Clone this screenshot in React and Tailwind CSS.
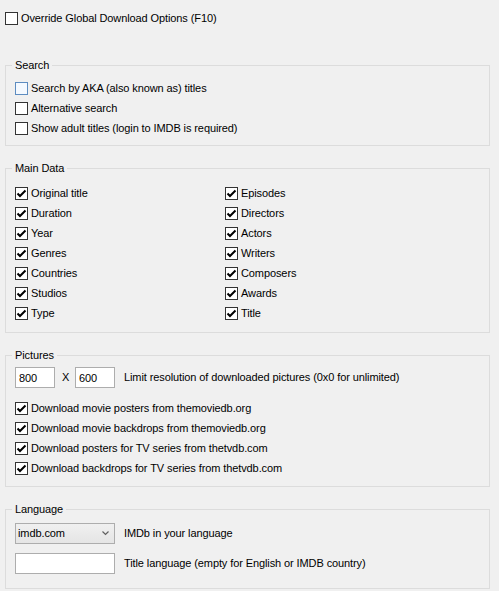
import React from "react";

const Check = ({ checked, focused }) => (
  <span
    className={
      "flex h-[13px] w-[13px] shrink-0 items-center justify-center border " +
      (focused ? "border-[#5d8cc0] bg-[#f4f9ff]" : "border-[#333333] bg-white")
    }
  >
    {checked && (
      <svg width="11" height="11" viewBox="0 0 11 11">
        <path d="M1.5 5.5 L4 8 L9.5 2.5" fill="none" stroke="#000" strokeWidth="2" />
      </svg>
    )}
  </span>
);

const CheckRow = ({ label, checked = false, focused = false }) => (
  <label className="flex h-[20px] items-center gap-[3px]">
    <Check checked={checked} focused={focused} />
    <span>{label}</span>
  </label>
);

const Group = ({ title, className = "", children }) => (
  <div className={"relative ml-[5px] w-[485px] border border-[#dcdcdc] " + className}>
    <span className="absolute -top-[8px] left-[6px] bg-[#f0f0f0] px-[3px] leading-[14px]">
      {title}
    </span>
    {children}
  </div>
);

const left = ["Original title", "Duration", "Year", "Genres", "Countries", "Studios", "Type"];
const right = ["Episodes", "Directors", "Actors", "Writers", "Composers", "Awards", "Title"];

export default function App() {
  return (
    <div
      className="h-[591px] w-[499px] overflow-hidden bg-[#f0f0f0] text-[11px] tracking-[-0.1px] text-black"
      style={{ fontFamily: "'Liberation Sans', Arial, sans-serif" }}
    >
      <div className="ml-[5px] pt-[8px]">
        <CheckRow label="Override Global Download Options (F10)" />
      </div>

      <Group title="Search" className="mt-[37px] pl-[9px] pt-[12px] pb-[7px]">
        <CheckRow label="Search by AKA (also known as) titles" focused />
        <CheckRow label="Alternative search" />
        <CheckRow label="Show adult titles (login to IMDB is required)" />
      </Group>

      <Group title="Main Data" className="mt-[22px] pl-[9px] pt-[14px] pb-[9px]">
        <div className="grid grid-cols-[210px_1fr]">
          <div>
            {left.map((l) => (
              <CheckRow key={l} label={l} checked />
            ))}
          </div>
          <div>
            {right.map((l) => (
              <CheckRow key={l} label={l} checked />
            ))}
          </div>
        </div>
      </Group>

      <Group title="Pictures" className="mt-[22px] pl-[9px] pt-[11px] pb-[8px]">
        <div className="flex items-center">
          <input
            defaultValue="800"
            className="h-[21px] w-[40px] border border-[#adadad] bg-white px-[3px] outline-none"
          />
          <span className="ml-[7px] w-[13px]">X</span>
          <input
            defaultValue="600"
            className="h-[21px] w-[40px] border border-[#adadad] bg-white px-[3px] outline-none"
          />
          <span className="ml-[9px]">Limit resolution of downloaded pictures (0x0 for unlimited)</span>
        </div>
        <div className="mt-[10px]">
          <CheckRow label="Download movie posters from themoviedb.org" checked />
          <CheckRow label="Download movie backdrops from themoviedb.org" checked />
          <CheckRow label="Download posters for TV series from thetvdb.com" checked />
          <CheckRow label="Download backdrops for TV series from thetvdb.com" checked />
        </div>
      </Group>

      <Group title="Language" className="mt-[22px] pl-[9px] pt-[13px] pb-[14px]">
        <div className="flex items-center">
          <div className="flex h-[21px] w-[100px] items-center justify-between border border-[#adadad] bg-gradient-to-b from-[#f0f0f0] to-[#e5e5e5] pl-[2px] pr-[5px]">
            <span>imdb.com</span>
            <svg width="7" height="5" viewBox="0 0 7 5">
              <path d="M0.5 0.5 L3.5 3.5 L6.5 0.5" fill="none" stroke="#606060" strokeWidth="1.2" />
            </svg>
          </div>
          <span className="ml-[9px]">IMDb in your language</span>
        </div>
        <div className="mt-[9px] flex items-center">
          <input className="h-[21px] w-[100px] border border-[#adadad] bg-white px-[3px] outline-none" />
          <span className="ml-[9px]">Title language (empty for English or IMDB country)</span>
        </div>
      </Group>
    </div>
  );
}
